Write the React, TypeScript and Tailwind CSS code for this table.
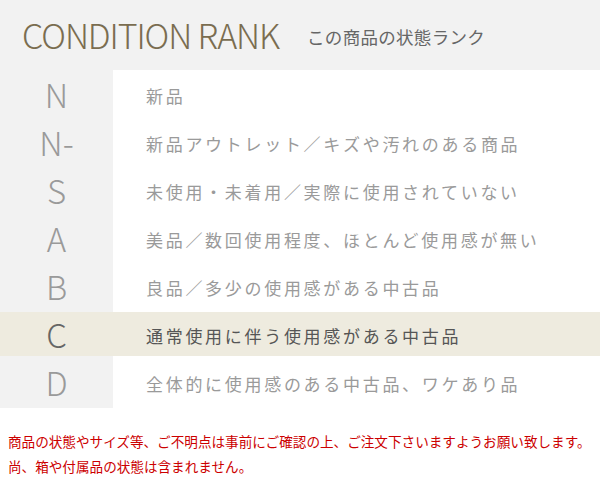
const ranks = [
  { rank: 'N', text: '新品' },
  { rank: 'N-', text: '新品アウトレット／キズや汚れのある商品' },
  { rank: 'S', text: '未使用・未着用／実際に使用されていない' },
  { rank: 'A', text: '美品／数回使用程度、ほとんど使用感が無い' },
  { rank: 'B', text: '良品／多少の使用感がある中古品' },
  { rank: 'C', text: '通常使用に伴う使用感がある中古品', current: true },
  { rank: 'D', text: '全体的に使用感のある中古品、ワケあり品' },
];

export default function App() {
  return (
    <div className="w-[600px] h-[483px] bg-white font-['Noto_Sans_CJK_JP',sans-serif]">
      <div className="h-[70px] bg-[#f2f2f2] flex items-center pl-[22px]">
        <h1 className="text-[34px] font-light text-[#7a6d50] leading-none tracking-[-1.1px]">CONDITION RANK</h1>
        <span className="ml-[28px] mt-[4px] text-[17.5px] text-[#666] tracking-[0.3px]">この商品の状態ランク</span>
      </div>

      <div className="bg-[linear-gradient(to_right,#f2f2f2_113px,#ffffff_113px)] pb-[2px]">
        {ranks.map(r => (
          <div key={r.rank} className="h-[48px] py-[2px]">
            <div className={`h-[44px] flex items-center ${r.current ? 'bg-[#eeebdf]' : ''}`}>
              <div
                className={`w-[113px] text-center text-[33px] font-light leading-none ${
                  r.current ? 'text-[#666]' : 'text-[#9a9a9a]'
                }`}
              >
                {r.rank}
              </div>
              <div
                className={`pl-[33px] text-[17px] tracking-[2.7px] pt-[4px] ${
                  r.current ? 'text-[#555]' : 'text-[#9a9a9a]'
                }`}
              >
                {r.text}
              </div>
            </div>
          </div>
        ))}
      </div>

      <div className="pt-[21px] pl-[8px] text-[13.6px] leading-[25px] text-[#cc0000]">
        <p>商品の状態やサイズ等、ご不明点は事前にご確認の上、ご注文下さいますようお願い致します。</p>
        <p>尚、箱や付属品の状態は含まれません。</p>
      </div>
    </div>
  );
}
